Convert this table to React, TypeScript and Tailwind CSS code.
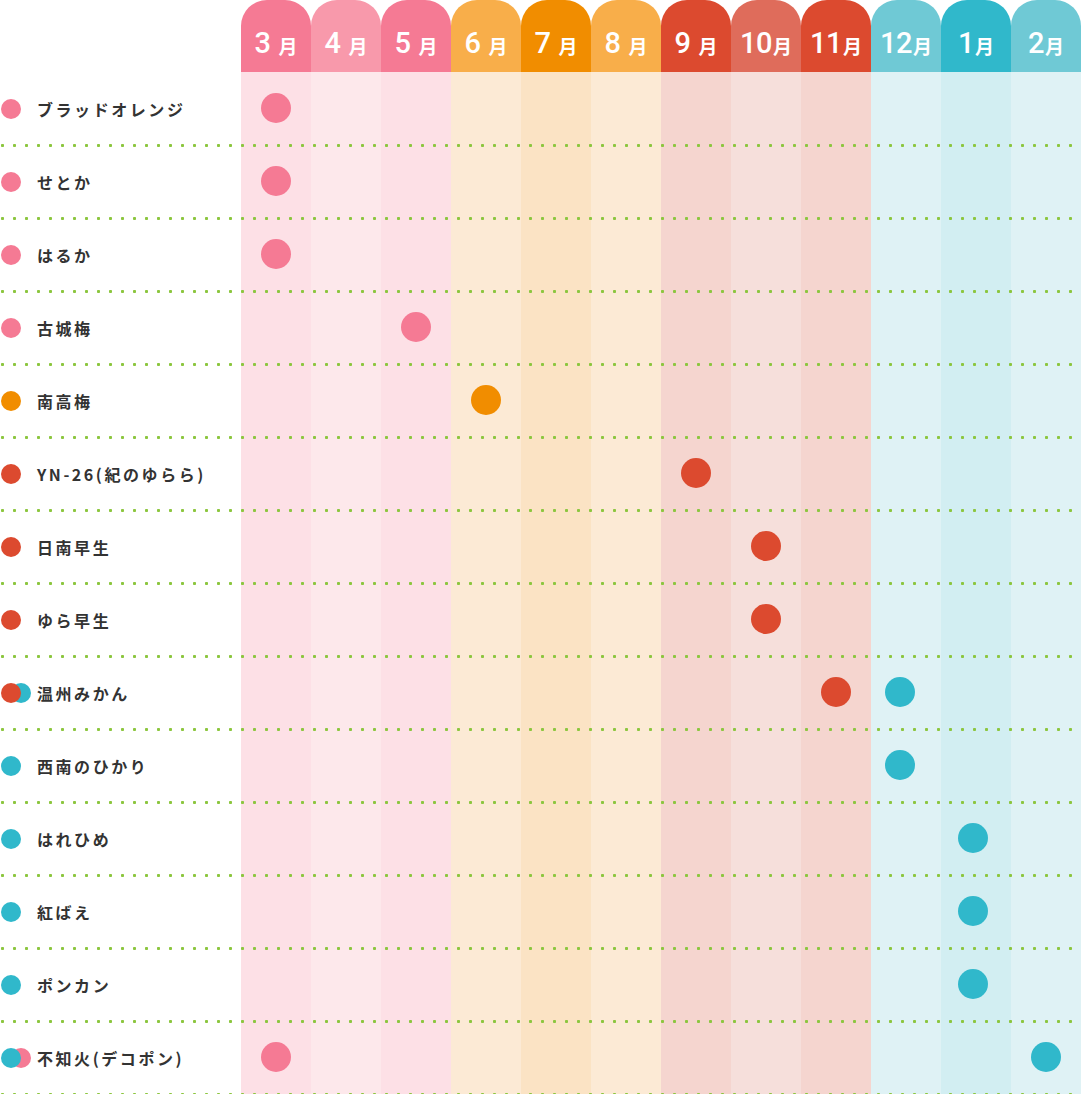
type Tone = 'pink' | 'orange' | 'red' | 'teal';

const dotColor: Record<Tone, string> = {
  pink: 'bg-[#f57a94]',
  orange: 'bg-[#f18d00]',
  red: 'bg-[#dc4a2f]',
  teal: 'bg-[#30b8cb]',
};

const months = [
  { num: '3', head: 'bg-[#f57a94]', body: 'bg-[#fde0e6]', spaced: true },
  { num: '4', head: 'bg-[#f899ab]', body: 'bg-[#fde8eb]', spaced: true },
  { num: '5', head: 'bg-[#f57a94]', body: 'bg-[#fde0e6]', spaced: true },
  { num: '6', head: 'bg-[#f8ae4a]', body: 'bg-[#fcead5]', spaced: true },
  { num: '7', head: 'bg-[#f18d00]', body: 'bg-[#fbe3c4]', spaced: true },
  { num: '8', head: 'bg-[#f8ae4a]', body: 'bg-[#fcead5]', spaced: true },
  { num: '9', head: 'bg-[#dc4a2f]', body: 'bg-[#f5d5cf]', spaced: true },
  { num: '10', head: 'bg-[#df6c5b]', body: 'bg-[#f6dfdb]', spaced: false },
  { num: '11', head: 'bg-[#dc4a2f]', body: 'bg-[#f5d5cf]', spaced: false },
  { num: '12', head: 'bg-[#6fc9d5]', body: 'bg-[#dff2f5]', spaced: false },
  { num: '1', head: 'bg-[#30b8cb]', body: 'bg-[#d2eef2]', spaced: false },
  { num: '2', head: 'bg-[#6fc9d5]', body: 'bg-[#dff2f5]', spaced: false },
];

// small nudges so the dots sit where the original chart put them
const nudge: Record<number, string> = {
  9: '-translate-x-[6px]',
  10: '-translate-x-[3px]',
};

type Row = { name: string; legend: Tone[]; marks: { col: number; tone: Tone }[] };

const rows: Row[] = [
  { name: 'ブラッドオレンジ', legend: ['pink'], marks: [{ col: 0, tone: 'pink' }] },
  { name: 'せとか', legend: ['pink'], marks: [{ col: 0, tone: 'pink' }] },
  { name: 'はるか', legend: ['pink'], marks: [{ col: 0, tone: 'pink' }] },
  { name: '古城梅', legend: ['pink'], marks: [{ col: 2, tone: 'pink' }] },
  { name: '南高梅', legend: ['orange'], marks: [{ col: 3, tone: 'orange' }] },
  { name: 'YN-26(紀のゆらら)', legend: ['red'], marks: [{ col: 6, tone: 'red' }] },
  { name: '日南早生', legend: ['red'], marks: [{ col: 7, tone: 'red' }] },
  { name: 'ゆら早生', legend: ['red'], marks: [{ col: 7, tone: 'red' }] },
  {
    name: '温州みかん',
    legend: ['red', 'teal'],
    marks: [
      { col: 8, tone: 'red' },
      { col: 9, tone: 'teal' },
    ],
  },
  { name: '西南のひかり', legend: ['teal'], marks: [{ col: 9, tone: 'teal' }] },
  { name: 'はれひめ', legend: ['teal'], marks: [{ col: 10, tone: 'teal' }] },
  { name: '紅ばえ', legend: ['teal'], marks: [{ col: 10, tone: 'teal' }] },
  { name: 'ポンカン', legend: ['teal'], marks: [{ col: 10, tone: 'teal' }] },
  {
    name: '不知火(デコポン)',
    legend: ['teal', 'pink'],
    marks: [
      { col: 0, tone: 'pink' },
      { col: 11, tone: 'teal' },
    ],
  },
];

function Legend({ tones }: { tones: Tone[] }) {
  return (
    <div className="flex w-[37px] shrink-0 items-center pl-px">
      {tones.map((t, i) => (
        <span
          key={i}
          className={`h-5 w-5 rounded-full ${dotColor[t]} ${i > 0 ? '-ml-[10px]' : ''}`}
          style={{ zIndex: tones.length - i }}
        />
      ))}
    </div>
  );
}

export default function App() {
  return (
    <div className="w-[1081px] bg-white font-['Noto_Sans_CJK_JP','Noto_Sans',sans-serif]">
      {/* month tabs */}
      <div className="flex h-[72px]">
        <div className="w-[241px] shrink-0" />
        {months.map((m) => (
          <div
            key={m.num}
            className={`flex w-[70px] shrink-0 items-center justify-center rounded-t-[26px] pt-[14px] text-white ${m.head}`}
          >
            <span className="font-['Roboto','Noto_Sans',sans-serif] text-[29px] leading-none font-medium tracking-[-0.02em]">
              {m.num}
            </span>
            <span className={`mt-[4px] text-[19px] leading-none font-bold ${m.spaced ? 'ml-[8px]' : 'ml-[1px]'}`}>
              月
            </span>
          </div>
        ))}
      </div>

      {/* rows */}
      {rows.map((r) => (
        <div
          key={r.name}
          className="relative flex h-[73px] after:absolute after:right-0 after:bottom-[-2px] after:left-0 after:z-10 after:h-[3px] after:bg-[radial-gradient(circle_at_1.5px_1.5px,#8cc63f_1.3px,transparent_1.9px)] after:bg-[length:12px_3px] after:bg-[position:1px_0] after:bg-repeat-x after:content-['']"
        >
          <div className="flex w-[241px] shrink-0 items-center bg-white">
            <Legend tones={r.legend} />
            <span className="text-[16px] font-bold tracking-[0.16em] whitespace-nowrap text-[#333]">
              {r.name}
            </span>
          </div>
          {months.map((m, ci) => {
            const mark = r.marks.find((k) => k.col === ci);
            return (
              <div key={m.num} className={`flex w-[70px] shrink-0 items-center justify-center pb-px ${m.body}`}>
                {mark && (
                  <span className={`h-[30px] w-[30px] rounded-full ${dotColor[mark.tone]} ${nudge[ci] ?? ''}`} />
                )}
              </div>
            );
          })}
        </div>
      ))}
    </div>
  );
}
